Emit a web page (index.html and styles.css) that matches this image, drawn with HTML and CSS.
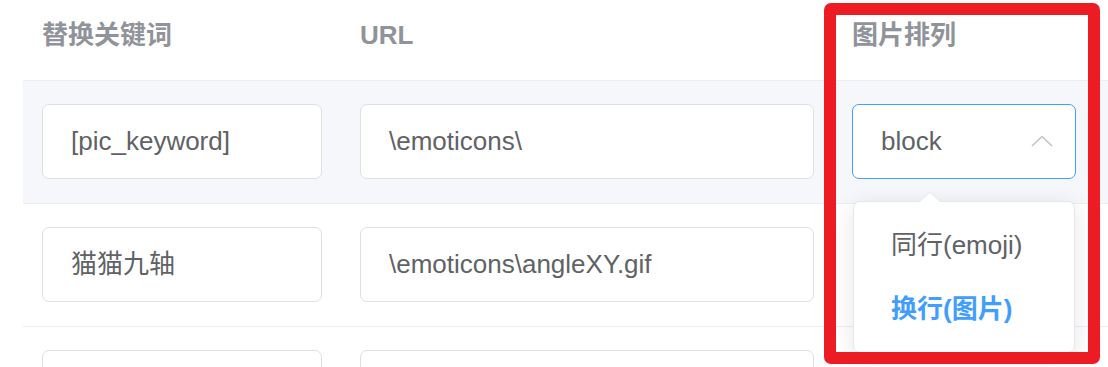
FILE: index.html
```html
<!DOCTYPE html>
<html>
<head>
    <title>表情替换</title>
    <link rel="stylesheet" href="styles.css">
</head>
<body>
    <div class="table">
        <div class="row head">
            <div class="cell c1">替换关键词</div>
            <div class="cell c2">URL</div>
            <div class="cell c3">图片排列</div>
        </div>

        <div class="row hover">
            <div class="cell c1"><div class="input">[pic_keyword]</div></div>
            <div class="cell c2"><div class="input">\emoticons\</div></div>
            <div class="cell c3">
                <div class="input select focus">
                    <span>block</span>
                    <svg class="arrow" width="22" height="12" viewBox="0 0 22 12">
                        <polyline points="1,11 11,1.5 21,11" fill="none" stroke="#c0c4cc" stroke-width="1.6"/>
                    </svg>
                </div>
            </div>
        </div>

        <div class="row">
            <div class="cell c1"><div class="input">猫猫九轴</div></div>
            <div class="cell c2"><div class="input">\emoticons\angleXY.gif</div></div>
            <div class="cell c3"></div>
        </div>

        <div class="row last">
            <div class="cell c1"><div class="input"></div></div>
            <div class="cell c2"><div class="input"></div></div>
            <div class="cell c3"></div>
        </div>
    </div>

    <div class="dropdown">
        <div class="item">同行(emoji)</div>
        <div class="item selected">换行(图片)</div>
    </div>

    <div class="mark"></div>
</body>
</html>
```

FILE: styles.css
```css
body {
    margin: 0;
    font-family: "Liberation Sans", Arial, "Noto Sans CJK SC", sans-serif;
    background-color: #ffffff;
    overflow: hidden;
    position: relative;
    width: 1108px;
    height: 367px;
}

.table {
    margin-left: 23px;
    width: 1085px;
    height: 367px;
    overflow: hidden;
}

.row {
    display: flex;
    border-bottom: 1px solid #ebeef5;
}

.row.hover {
    background-color: #f5f7fa;
}

.row.last {
    height: 41px;
    overflow: hidden;
    border-bottom: none;
}

.cell {
    padding: 23px 19px 24px 19px;
    box-sizing: border-box;
}

.c1 { width: 318px; }
.c2 { width: 492px; }
.c3 { width: 262px; }

.head .cell {
    height: 80px;
    padding-top: 18px;
    padding-bottom: 0;
    font-size: 26px;
    line-height: 34px;
    font-weight: bold;
    color: #909399;
}

.input {
    height: 75px;
    box-sizing: border-box;
    border: 1px solid #dcdfe6;
    border-radius: 7px;
    background-color: #ffffff;
    padding: 0 28px;
    font-size: 26px;
    line-height: 73px;
    color: #606266;
    white-space: nowrap;
}

.select {
    display: flex;
    justify-content: space-between;
    align-items: center;
    padding-right: 22px;
}

.select.focus {
    border-color: #409eff;
}

.arrow {
    display: block;
    margin-top: -2px;
}

.dropdown {
    position: absolute;
    left: 853px;
    top: 201px;
    width: 222px;
    height: 152px;
    box-sizing: border-box;
    padding: 11px 0;
    background-color: #ffffff;
    border: 1px solid #e4e7ed;
    border-radius: 7px;
    box-shadow: 0 4px 22px rgba(0, 0, 0, 0.1);
    z-index: 2;
}

.dropdown::before {
    content: "";
    position: absolute;
    left: 65px;
    top: -11px;
    border-left: 11px solid transparent;
    border-right: 11px solid transparent;
    border-bottom: 10px solid #ebeef5;
}

.dropdown::after {
    content: "";
    position: absolute;
    left: 66px;
    top: -9px;
    border-left: 10px solid transparent;
    border-right: 10px solid transparent;
    border-bottom: 9px solid #ffffff;
}

.item {
    height: 64px;
    line-height: 64px;
    padding: 0 37px;
    font-size: 26px;
    color: #606266;
    white-space: nowrap;
}

.item.selected {
    color: #409eff;
    font-weight: bold;
}

.mark {
    position: absolute;
    left: 824px;
    top: 3px;
    width: 276px;
    height: 361px;
    box-sizing: border-box;
    border: 12px solid #ed1c24;
    border-radius: 7px;
    z-index: 3;
}
```
